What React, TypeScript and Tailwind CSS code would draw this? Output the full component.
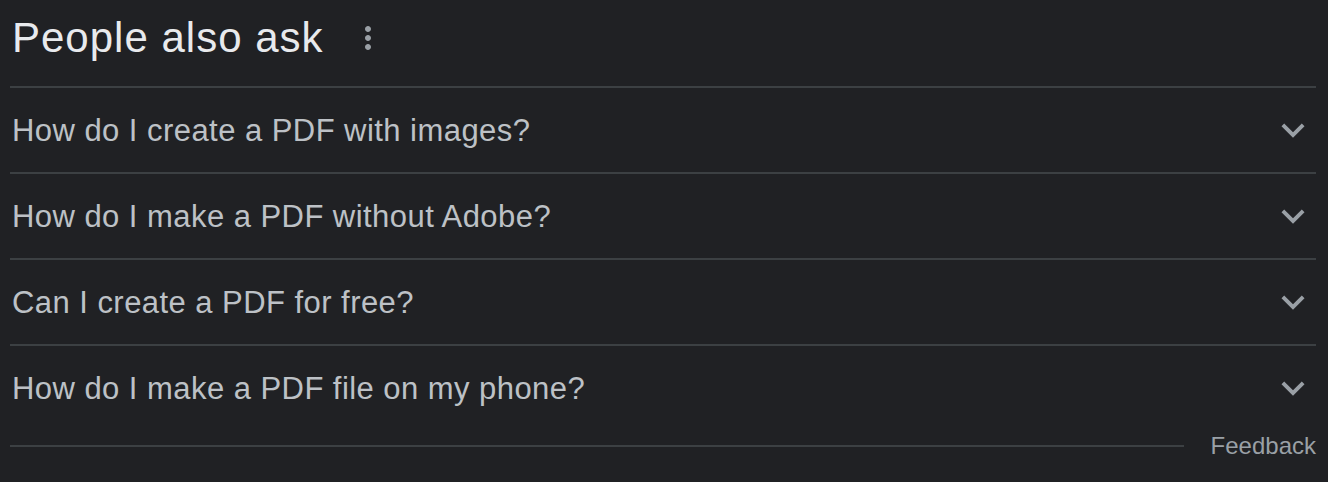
import React from 'react';

const questions = [
  'How do I create a PDF with images?',
  'How do I make a PDF without Adobe?',
  'Can I create a PDF for free?',
  'How do I make a PDF file on my phone?',
];

function MoreVert() {
  return (
    <svg viewBox="0 0 24 24" className="w-[36px] h-[36px] fill-[#9aa0a6]">
      <path d="M12 8c1.1 0 2-.9 2-2s-.9-2-2-2-2 .9-2 2 .9 2 2 2zm0 2c-1.1 0-2 .9-2 2s.9 2 2 2 2-.9 2-2-.9-2-2-2zm0 6c-1.1 0-2 .9-2 2s.9 2 2 2 2-.9 2-2-.9-2-2-2z" />
    </svg>
  );
}

function ExpandMore() {
  return (
    <svg viewBox="0 0 24 24" className="w-[46px] h-[46px] fill-[#9aa0a6] shrink-0">
      <path d="M16.59 8.59L12 13.17 7.41 8.59 6 10l6 6 6-6z" />
    </svg>
  );
}

export default function App() {
  return (
    <div className="w-[1328px] h-[482px] bg-[#202124] pl-[10px] pr-[12px] font-['Liberation_Sans',Arial,sans-serif] overflow-hidden">
      <div className="h-[88px] flex items-center pb-[11px] border-b-2 border-[#3c4043]">
        <h2 className="ml-[2px] text-[42px] leading-none tracking-[1px] text-[#e8eaed] font-normal">People also ask</h2>
        <div className="ml-[26px] flex items-center">
          <MoreVert />
        </div>
      </div>

      {questions.map((q, idx) => {
        const last = idx === questions.length - 1;
        return (
          <div
            key={q}
            className={`flex items-center justify-between ${last ? 'h-[84px]' : 'h-[86px] border-b-2 border-[#3c4043]'}`}
          >
            <span className="ml-[2px] text-[31px] leading-none tracking-[0.45px] text-[#bdc1c6]">{q}</span>
            <ExpandMore />
          </div>
        );
      })}

      <div className="h-[32px] flex items-center gap-[27px]">
        <div className="flex-1 h-[2px] bg-[#3c4043]" />
        <span className="text-[24px] leading-none text-[#9aa0a6]">Feedback</span>
      </div>
    </div>
  );
}
